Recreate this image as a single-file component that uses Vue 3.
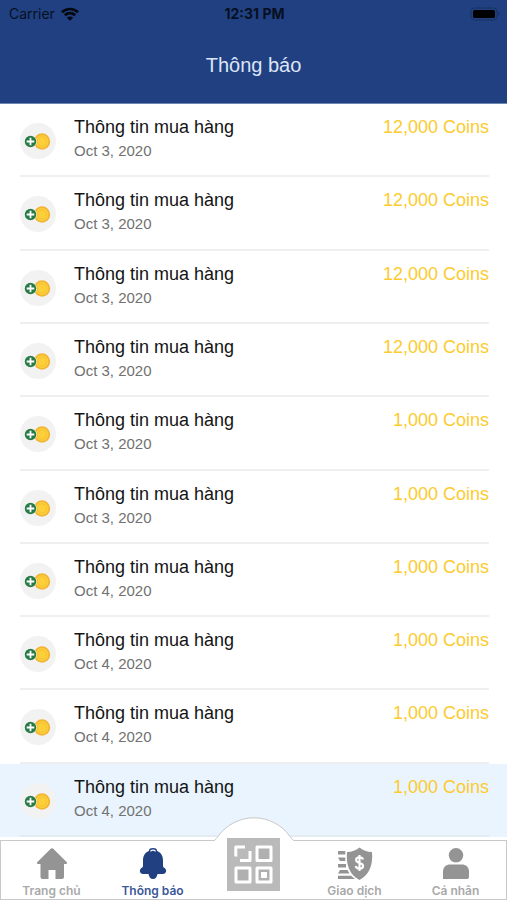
<script setup>
import { ref } from 'vue'

const dates = [3, 3, 3, 3, 3, 3, 4, 4, 4, 4]
const items = dates.map((day, index) => ({
  id: index,
  title: 'Thông tin mua hàng',
  date: `Oct ${day}, 2020`,
  amount: index < 4 ? '12,000 Coins' : '1,000 Coins',
}))
const selected = ref(9)
</script>

<template>
  <div class="screen">
    <header class="top">
      <div class="status">
        <div class="carrier">
          <span>Carrier</span>
          <svg class="wifi" viewBox="0 0 18 14" aria-hidden="true">
            <path d="M1 5.2a11.6 11.6 0 0 1 16 0" />
            <path d="M3.8 8.2a7.6 7.6 0 0 1 10.4 0" />
            <path class="dot" d="M9 13.8 5.9 10.7a4.4 4.4 0 0 1 6.2 0z" />
          </svg>
        </div>
        <span class="time">12:31 PM</span>
        <svg class="battery" viewBox="0 0 30 14" aria-hidden="true">
          <rect class="shell" x="1" y="1" width="26" height="12" rx="3.5" />
          <rect x="3" y="3" width="22" height="8" rx="1.5" />
          <path class="cap" d="M28.3 5c1.6.6 1.6 3.4 0 4z" />
        </svg>
      </div>
      <h1>Thông báo</h1>
    </header>

    <ul class="list">
      <li
        v-for="item in items"
        :key="item.id"
        :class="{ unread: item.id === selected }"
      >
        <div class="row">
          <svg class="coin" viewBox="0 0 36 36" aria-hidden="true">
            <circle cx="18" cy="18" r="18" fill="#f2f2f3" />
            <circle cx="22" cy="18.5" r="8.2" fill="#f2b535" />
            <circle cx="22" cy="18.5" r="6.4" fill="#fdd03a" />
            <circle cx="22" cy="18.5" r="4.6" fill="none" stroke="#f6c033" stroke-width="1" />
            <circle cx="10.5" cy="18.5" r="6.2" fill="#f2f2f3" />
            <circle cx="10.5" cy="18.5" r="5.7" fill="#287b46" />
            <path d="M10.5 14.7v7.600M6.700 18.500h7.600" stroke="#fff" stroke-width="1.800" />
          </svg>
          <div class="info">
            <p class="title">{{ item.title }}</p>
            <p class="date">{{ item.date }}</p>
          </div>
          <span class="amount">{{ item.amount }}</span>
        </div>
      </li>
    </ul>

    <nav class="tabs">
      <svg class="hump" viewBox="0 0 84 25" aria-hidden="true">
        <path class="hump-fill" d="M0 25 2 24Q4 22 6 19.5A44 44 0 0 1 78 19.5Q80 22 82 24L84 25z" />
        <path class="hump-line" d="M0 23.5H2.5Q4 22 6 19.5A44 44 0 0 1 78 19.5Q80 22 81.5 23.5H84" />
      </svg>
      <a href="#home">
        <svg viewBox="0 0 34 34" aria-hidden="true">
          <path d="M16 2.6q1-.9 2 0L31.600 16q1.300 1.800-.8 2H29v13q0 2-2 2h-6.500v-9h-7v9H7.500q-2 0-2-2V18H3.200q-2.100-.2-.8-2z" />
        </svg>
        <span>Trang chủ</span>
      </a>
      <a href="#notifications" class="active">
        <svg viewBox="0 0 34 34" aria-hidden="true">
          <path d="M12.800 4.900C13 2.700 14.700 2 17 2s4 .7 4.200 2.900C25.200 6.500 27 10 27 14v5.500c0 1.500.8 2 1.600 2.600 2.600 2 1.700 5.900-1.600 5.900h-5.500c-.6 3-2 5-4.500 5s-3.900-2-4.500-5H7c-3.300 0-4.200-3.900-1.600-5.900.8-.6 1.600-1.100 1.600-2.600V14c0-4 1.800-7.500 5.800-9.100z" />
          <path d="M14.400 5.200Q17 3.200 19.600 5.200" fill="none" stroke="#fff" stroke-width="1.300" />
        </svg>
        <span>Thông báo</span>
      </a>
      <a href="#scan" class="scan" aria-label="QR">
        <svg viewBox="0 0 53 53" aria-hidden="true">
          <rect width="53" height="53" fill="#bababa" />
          <g fill="#b0b0b0" stroke="#fff" stroke-width="3" stroke-linejoin="round">
            <path d="M8.800 18.500V9h9.200M23 13v9.500H13" fill="none" />
            <rect x="30" y="9" width="14" height="13.500" />
            <rect x="9" y="30" width="14" height="14" />
            <rect x="30" y="30" width="14" height="14" />
          </g>
          <rect x="34" y="34" width="6" height="6" fill="#fff" />
        </svg>
      </a>
      <a href="#transactions">
        <svg class="wide" viewBox="0 0 38 34" aria-hidden="true">
          <path d="M2 5h7.300v3.400H2zM2 11.600h7.300v3.400H4zM2 18h8v3.400H2zM4 24h7.500l2 3.400H2zM2 29.700h13l4 3.300H2z" />
          <path d="M23.500 1.500c3.500 3 7.500 4.300 12.500 4.500 1.200 13-2.500 22.500-12.500 28C13.500 28.500 9.800 19 11 6c5-.2 9-1.500 12.500-4.500z" />
          <path d="M27 13.600c-.4-1.600-1.700-2.300-3.500-2.300-2 0-3.400 1-3.400 2.700 0 3.900 7 2 7 5.900 0 1.700-1.500 2.700-3.600 2.700s-3.500-.9-3.800-2.600M23.500 9v16" fill="none" stroke="#fff" stroke-width="2.100" />
        </svg>
        <span>Giao dịch</span>
      </a>
      <a href="#profile">
        <svg viewBox="0 0 34 34" aria-hidden="true">
          <circle cx="17" cy="9.300" r="7.200" />
          <path d="M4 33v-7c0-5 2.800-7.500 7.500-7.500h11c4.700 0 7.500 2.500 7.500 7.500v5q0 2-2 2z" />
        </svg>
        <span>Cá nhân</span>
      </a>
    </nav>
  </div>
</template>

<style>
body {
  margin: 0;
  background: #fff;
}
</style>

<style scoped>
.screen {
  display: flex;
  flex-direction: column;
  min-height: 100vh;
  font-family: "Liberation Sans", Arial, sans-serif;
  color: #141414;
}
.top {
  display: flex;
  flex-direction: column;
  height: 104px;
  box-sizing: border-box;
  background: #204082;
  border-bottom: 1px solid #6d86b2;
}
.status {
  display: grid;
  grid-template-columns: 1fr auto 1fr;
  align-items: center;
  height: 27px;
  padding: 0 7px 0 9px;
  font-family: Inter, sans-serif;
  font-size: 14px;
  color: #06101f;
}
.carrier {
  display: flex;
  align-items: center;
  gap: 6px;
}
.wifi {
  width: 18px;
  height: 14px;
  fill: none;
  stroke: #03070f;
  stroke-width: 2.6;
}
.wifi .dot {
  fill: #03070f;
  stroke: none;
}
.time {
  font-weight: 700;
}
.battery {
  justify-self: end;
  width: 30px;
  height: 14px;
}
.battery .shell {
  fill: none;
  stroke: #17305f;
}
.battery .cap {
  fill: #17305f;
}
h1 {
  margin: 0;
  padding-top: 26px;
  font-size: 20px;
  line-height: 24px;
  font-weight: 400;
  text-align: center;
  color: #dde5f5;
}
.list {
  flex: 1;
  display: grid;
  grid-auto-rows: 1fr;
  margin: 0 0 3px;
  padding: 0;
  list-style: none;
}
li {
  display: flex;
  padding: 0 18px 0 20px;
}
.unread {
  background: #e9f4fe;
}
.row {
  flex: 1;
  display: flex;
  align-items: flex-start;
  border-bottom: 2px solid #efeff0;
}
.unread .row {
  border-bottom-color: #e2eaf2;
}
.coin {
  width: 36px;
  height: 36px;
  margin: 19px 18px 0 0;
}
.info {
  flex: 1;
  padding-top: 11px;
}
p {
  margin: 0;
}
.title,
.amount {
  font-size: 18px;
  line-height: 24px;
}
.date {
  font-size: 15px;
  line-height: 24px;
  color: #717171;
}
.amount {
  padding-top: 11px;
  color: #fccb2e;
}
.tabs {
  position: relative;
  display: grid;
  grid-template-columns: repeat(5, 1fr);
  height: 60px;
  box-sizing: border-box;
  border: 1px solid #c9c9c9;
  background: #fff;
}
.hump {
  position: absolute;
  left: 50%;
  bottom: 57px;
  width: 84px;
  height: 25px;
  transform: translateX(-50%);
}
.hump-fill {
  fill: #fff;
}
.hump-line {
  fill: none;
  stroke: #c9c9c9;
}
.tabs a {
  display: flex;
  flex-direction: column;
  align-items: center;
  gap: 3px;
  padding-top: 5px;
  font-family: Inter, sans-serif;
  font-size: 12px;
  line-height: 16px;
  font-weight: 600;
  color: #a9a9a9;
  text-decoration: none;
}
.tabs a svg {
  flex: none;
  width: 34px;
  height: 34px;
  fill: #949494;
}
.tabs a .wide {
  width: 38px;
}
.tabs .active {
  color: #3c5897;
}
.tabs .active svg {
  fill: #204082;
}
.tabs .scan {
  position: relative;
  padding: 0;
  margin-top: -3px;
}
.tabs .scan svg {
  width: 53px;
  height: 53px;
}
</style>
